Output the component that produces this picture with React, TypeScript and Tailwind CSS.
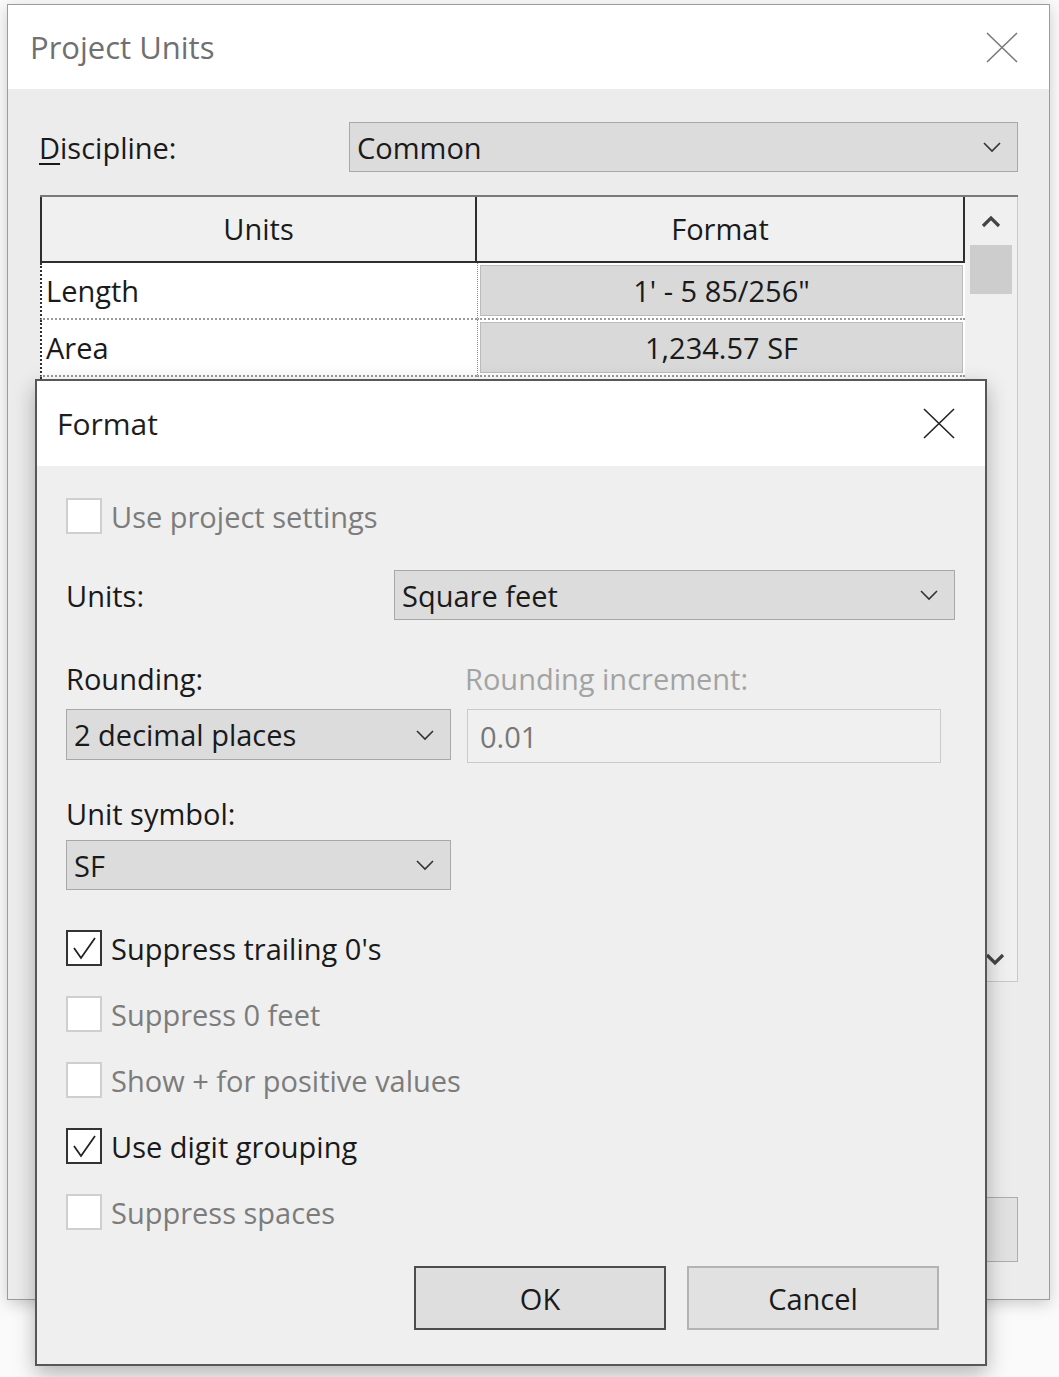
import React from 'react'

const Chevron = ({ className = '' }: { className?: string }) => (
  <svg width="20" height="12" viewBox="0 0 20 12" className={className}>
    <polyline points="2,2 10,10 18,2" fill="none" stroke="currentColor" strokeWidth="1.6" />
  </svg>
)

const CloseIcon = ({ className = '' }: { className?: string }) => (
  <svg width="32" height="31" viewBox="0 0 32 31" className={className}>
    <line x1="1" y1="1" x2="31" y2="30" stroke="currentColor" strokeWidth="1.6" />
    <line x1="31" y1="1" x2="1" y2="30" stroke="currentColor" strokeWidth="1.6" />
  </svg>
)

const Select = ({ value, className = '' }: { value: string; className?: string }) => (
  <div
    className={`flex items-center justify-between bg-[#dcdcdc] border border-[#a8a8a8] pl-[7px] pr-[15px] ${className}`}
  >
    <span className="leading-none">{value}</span>
    <Chevron className="text-[#333]" />
  </div>
)

const CheckBox = ({ checked = false, disabled = false }: { checked?: boolean; disabled?: boolean }) => (
  <span
    className={`w-[36px] h-[36px] shrink-0 flex items-center justify-center bg-white border-2 ${
      disabled ? 'border-[#cfcfcf]' : 'border-[#333]'
    }`}
  >
    {checked && (
      <svg width="30" height="30" viewBox="0 0 30 30">
        <polyline points="5,15 12,25 26,5" fill="none" stroke="#222" strokeWidth="1.8" />
      </svg>
    )}
  </span>
)

const CheckRow = ({ label, checked, disabled }: { label: string; checked?: boolean; disabled?: boolean }) => (
  <div className="flex items-center h-[36px]">
    <CheckBox checked={checked} disabled={disabled} />
    <span className={`ml-[9px] leading-none ${disabled ? 'text-[#7c7c7c]' : 'text-[#1a1a1a]'}`}>{label}</span>
  </div>
)

const rows = [
  { name: 'Length', value: '1\' - 5 85/256"' },
  { name: 'Area', value: '1,234.57 SF' },
]

const ProjectUnits = () => (
  <div className="absolute left-[7px] top-[4px] w-[1043px] h-[1296px] flex flex-col bg-[#ececec] border border-[#9c9c9c] shadow-[0_4px_14px_rgba(0,0,0,0.18)]">
    <div className="h-[84px] shrink-0 bg-white flex items-center justify-between pl-[22px] pr-[31px]">
      <span className="text-[31px] text-[#707070] leading-none">Project Units</span>
      <CloseIcon className="text-[#7a7a7a]" />
    </div>

    <div className="flex-1 flex flex-col pl-[31px] pr-[31px] pt-[33px]">
      <div className="flex items-center h-[50px]">
        <span className="w-[310px] leading-none">
          <span className="underline underline-offset-4">D</span>iscipline:
        </span>
        <Select value="Common" className="flex-1 h-[50px] pr-[14px]" />
      </div>

      <div className="mt-[23px] h-[787px] flex ml-[1px] border-t-2 border-[#7a7a7a]">
        <div className="w-[925px] flex flex-col bg-white overflow-hidden">
          <div className="h-[66px] shrink-0 flex bg-[#f0f0f0]">
            <div className="w-[437px] flex items-center justify-center border-l-2 border-r-2 border-b-2 border-[#2e2e2e]">
              Units
            </div>
            <div className="flex-1 flex items-center justify-center border-r-2 border-b-2 border-[#2e2e2e]">
              Format
            </div>
          </div>
          {rows.map((r) => (
            <div key={r.name} className="h-[57px] shrink-0 flex">
              <div className="w-[437px] flex items-center pl-[4px] bg-white border-l-2 border-[#2e2e2e] border-b-2 border-b-[#9a9a9a] border-dotted">
                <span className="leading-none">{r.name}</span>
              </div>
              <div className="flex-1 p-[2px] border-l border-dotted border-[#8a8a8a] border-b-2 border-b-[#9a9a9a]">
                <div className="h-full flex items-center justify-center bg-[#d9d9d9] border border-[#bcbcbc]">
                  <span className="leading-none">{r.value}</span>
                </div>
              </div>
            </div>
          ))}
          <div className="flex-1 border-l-2 border-[#2e2e2e]" />
        </div>
        <div className="flex-1 flex flex-col bg-[#f0f0f0] border-r border-b border-[#c9c9c9]">
          <div className="h-[48px] flex items-center justify-center">
            <svg width="22" height="14" viewBox="0 0 22 14">
              <polyline points="3,12 11,4 19,12" fill="none" stroke="#444" strokeWidth="3.2" />
            </svg>
          </div>
          <div className="mx-[5px] h-[49px] bg-[#cdcdcd]" />
          <div className="flex-1" />
          <div className="h-[52px] flex items-end justify-center pb-[14px] pl-[8px]">
            <svg width="22" height="14" viewBox="0 0 22 14">
              <polyline points="3,2 11,10 19,2" fill="none" stroke="#444" strokeWidth="3.2" />
            </svg>
          </div>
        </div>
      </div>

      <div className="mt-[215px] flex justify-end gap-[20px]">
        <div className="w-[250px] h-[65px] bg-[#e1e1e1] border border-[#adadad] flex items-center justify-center">OK</div>
        <div className="w-[250px] h-[65px] bg-[#e1e1e1] border border-[#adadad] flex items-center justify-center">Cancel</div>
        <div className="w-[250px] h-[65px] bg-[#e1e1e1] border border-[#adadad] flex items-center justify-center">Help</div>
      </div>
    </div>
  </div>
)

const FormatDialog = () => (
  <div className="absolute left-[35px] top-[379px] w-[952px] h-[987px] flex flex-col bg-[#efefef] border-2 border-[#575757] shadow-[0_8px_20px_rgba(0,0,0,0.28)]">
    <div className="h-[85px] shrink-0 bg-white flex items-center justify-between pl-[20px] pr-[30px]">
      <span className="text-[30px] text-[#1e1e1e] leading-none">Format</span>
      <CloseIcon className="text-[#222]" />
    </div>

    <div className="flex-1 flex flex-col pl-[29px] pr-[30px] pt-[32px]">
      <CheckRow label="Use project settings" disabled />

      <div className="mt-[36px] flex items-center h-[50px]">
        <span className="w-[328px] leading-none">Units:</span>
        <Select value="Square feet" className="w-[561px] h-[50px] pr-[14px]" />
      </div>

      <div className="mt-[40px] grid grid-cols-[385px_474px] gap-x-[16px]">
        <div className="h-[36px] flex items-center leading-none">Rounding:</div>
        <div className="h-[36px] flex items-center leading-none text-[#a3a3a3] -ml-[2px]">Rounding increment:</div>
        <Select value="2 decimal places" className="mt-[13px] h-[51px]" />
        <div className="mt-[13px] h-[54px] flex items-center pl-[12px] bg-[#f0f0f0] border border-[#c9c9c9] text-[#777] leading-none">
          0.01
        </div>
      </div>

      <div className="mt-[32px] h-[36px] flex items-center leading-none">Unit symbol:</div>
      <Select value="SF" className="mt-[9px] w-[385px] h-[50px]" />

      <div className="mt-[40px] flex flex-col gap-[30px]">
        <CheckRow label="Suppress trailing 0's" checked />
        <CheckRow label="Suppress 0 feet" disabled />
        <CheckRow label="Show + for positive values" disabled />
        <CheckRow label="Use digit grouping" checked />
        <CheckRow label="Suppress spaces" disabled />
      </div>

      <div className="mt-[36px] flex justify-end gap-[21px] pr-[16px]">
        <div className="w-[252px] h-[64px] bg-[#dedede] border-2 border-[#4d4d4d] flex items-center justify-center leading-none">
          OK
        </div>
        <div className="w-[252px] h-[64px] bg-[#e1e1e1] border-2 border-[#b3b3b3] flex items-center justify-center leading-none">
          Cancel
        </div>
      </div>
    </div>
  </div>
)

export default function App() {
  return (
    <div className="relative w-[1059px] h-[1377px] overflow-hidden bg-[#fafafa] font-['Open_Sans',sans-serif] text-[29px] text-[#1a1a1a]">
      <ProjectUnits />
      <FormatDialog />
    </div>
  )
}
